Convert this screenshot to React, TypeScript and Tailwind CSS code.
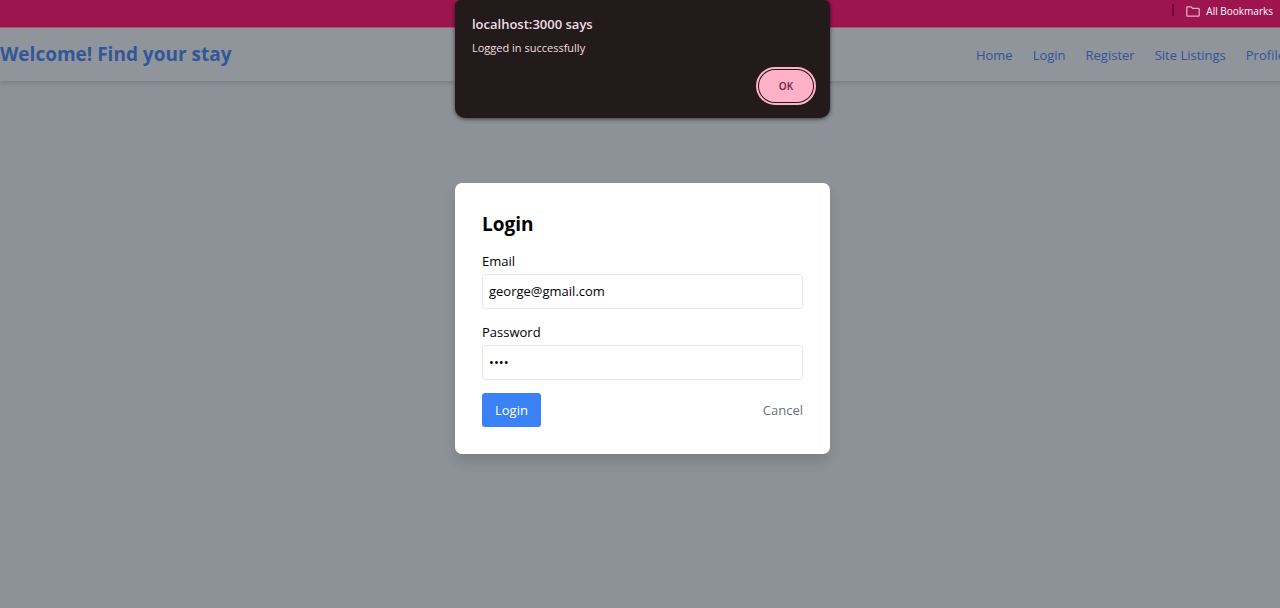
import { useState } from "react";

const links = ["Home", "Login", "Register", "Site Listings", "Profile"];

function BookmarksBar() {
  return (
    <div className="flex h-7 items-start justify-end border-b border-[#a85777] bg-[#9e144f] pr-3 text-white">
      <span className="mt-1 h-3 w-0.5 bg-[#730638]" />
      <button type="button" className="ml-3 flex items-center gap-1.5 pt-[3px] text-[10px] leading-4">
        <svg width="14" height="11" viewBox="0 0 14 11" fill="none" stroke="#e3b5c8" strokeWidth="1.2" aria-hidden="true">
          <path d="M1.6 .8h3.6l1.4 1.5h5.8c.5 0 .8.3.8.8v6.3c0 .5-.3.8-.8.8H1.6c-.5 0-.8-.3-.8-.8V1.6c0-.5.3-.8.8-.8Z" />
        </svg>
        All Bookmarks
      </button>
    </div>
  );
}

function Header() {
  return (
    <header className="flex items-center justify-between bg-[#90959b] py-3 shadow-[0_2px_4px_rgba(0,0,0,0.14)]">
      <h1 className="text-[19px] leading-[29px] font-bold text-[#325798]">Welcome! Find your stay</h1>
      <nav className="flex gap-5 text-[13px] leading-5 text-[#34529a]">
        {links.map((link) => (
          <a key={link} href="#" className="whitespace-nowrap">
            {link}
          </a>
        ))}
      </nav>
    </header>
  );
}

function AlertDialog() {
  return (
    <div
      role="alertdialog"
      aria-labelledby="alert-title"
      aria-describedby="alert-text"
      className="absolute inset-x-0 top-0 mx-auto w-[375px] rounded-b-[10px] rounded-t-md bg-[#231a1b] px-[17px] pt-3.5 pb-4 text-[#f1dfe2] shadow-[0_1px_4px_rgba(0,0,0,0.6)]"
    >
      <h2 id="alert-title" className="text-[13px] leading-5 font-semibold">localhost:3000 says</h2>
      <p id="alert-text" className="mt-1.5 text-[11px] leading-4">Logged in successfully</p>
      <div className="mt-3.5 flex justify-end">
        <button
          type="button"
          className="h-8 w-[54px] rounded-full bg-[#ffb1c8] text-[10px] font-semibold text-[#65213e] outline-2 outline-offset-1 outline-[#ffb1c8]"
        >
          OK
        </button>
      </div>
    </div>
  );
}

function LoginCard() {
  const [email, setEmail] = useState("george@gmail.com");
  const [password, setPassword] = useState("pass");
  const field = "mt-[3px] block h-[35px] w-full rounded-[3px] border border-gray-200 bg-white px-1.5 text-[13px] outline-none";

  return (
    <form
      onSubmit={(event) => event.preventDefault()}
      className="w-[375px] rounded-[7px] bg-white p-[27px] text-[13px] leading-5 text-black shadow-[0_8px_12px_rgba(0,0,0,0.12)]"
    >
      <h2 className="mb-[13px] text-[19px] leading-7 font-bold">Login</h2>
      <div className="mb-[13px]">
        <label htmlFor="email" className="block">Email</label>
        <input id="email" type="email" value={email} onChange={(event) => setEmail(event.target.value)} className={field} />
      </div>
      <div className="mb-[13px]">
        <label htmlFor="password" className="block">Password</label>
        <input id="password" type="password" value={password} onChange={(event) => setPassword(event.target.value)} className={field} />
      </div>
      <div className="flex items-center justify-between">
        <button type="submit" className="rounded-[3px] bg-[#3b82f6] px-[13px] py-[7px] text-white">Login</button>
        <button type="button" className="text-[#6b7280]">Cancel</button>
      </div>
    </form>
  );
}

export default function App() {
  return (
    <div className="overflow-hidden bg-[#8d9299] font-['Open_Sans','Noto_Sans',sans-serif]">
      <div className="relative -mr-[5px] flex min-h-screen flex-col">
        <BookmarksBar />
        <div className="flex grow flex-col">
          <Header />
          <main className="flex grow items-center justify-center pb-[53px]">
            <LoginCard />
          </main>
        </div>
        <AlertDialog />
      </div>
    </div>
  );
}
